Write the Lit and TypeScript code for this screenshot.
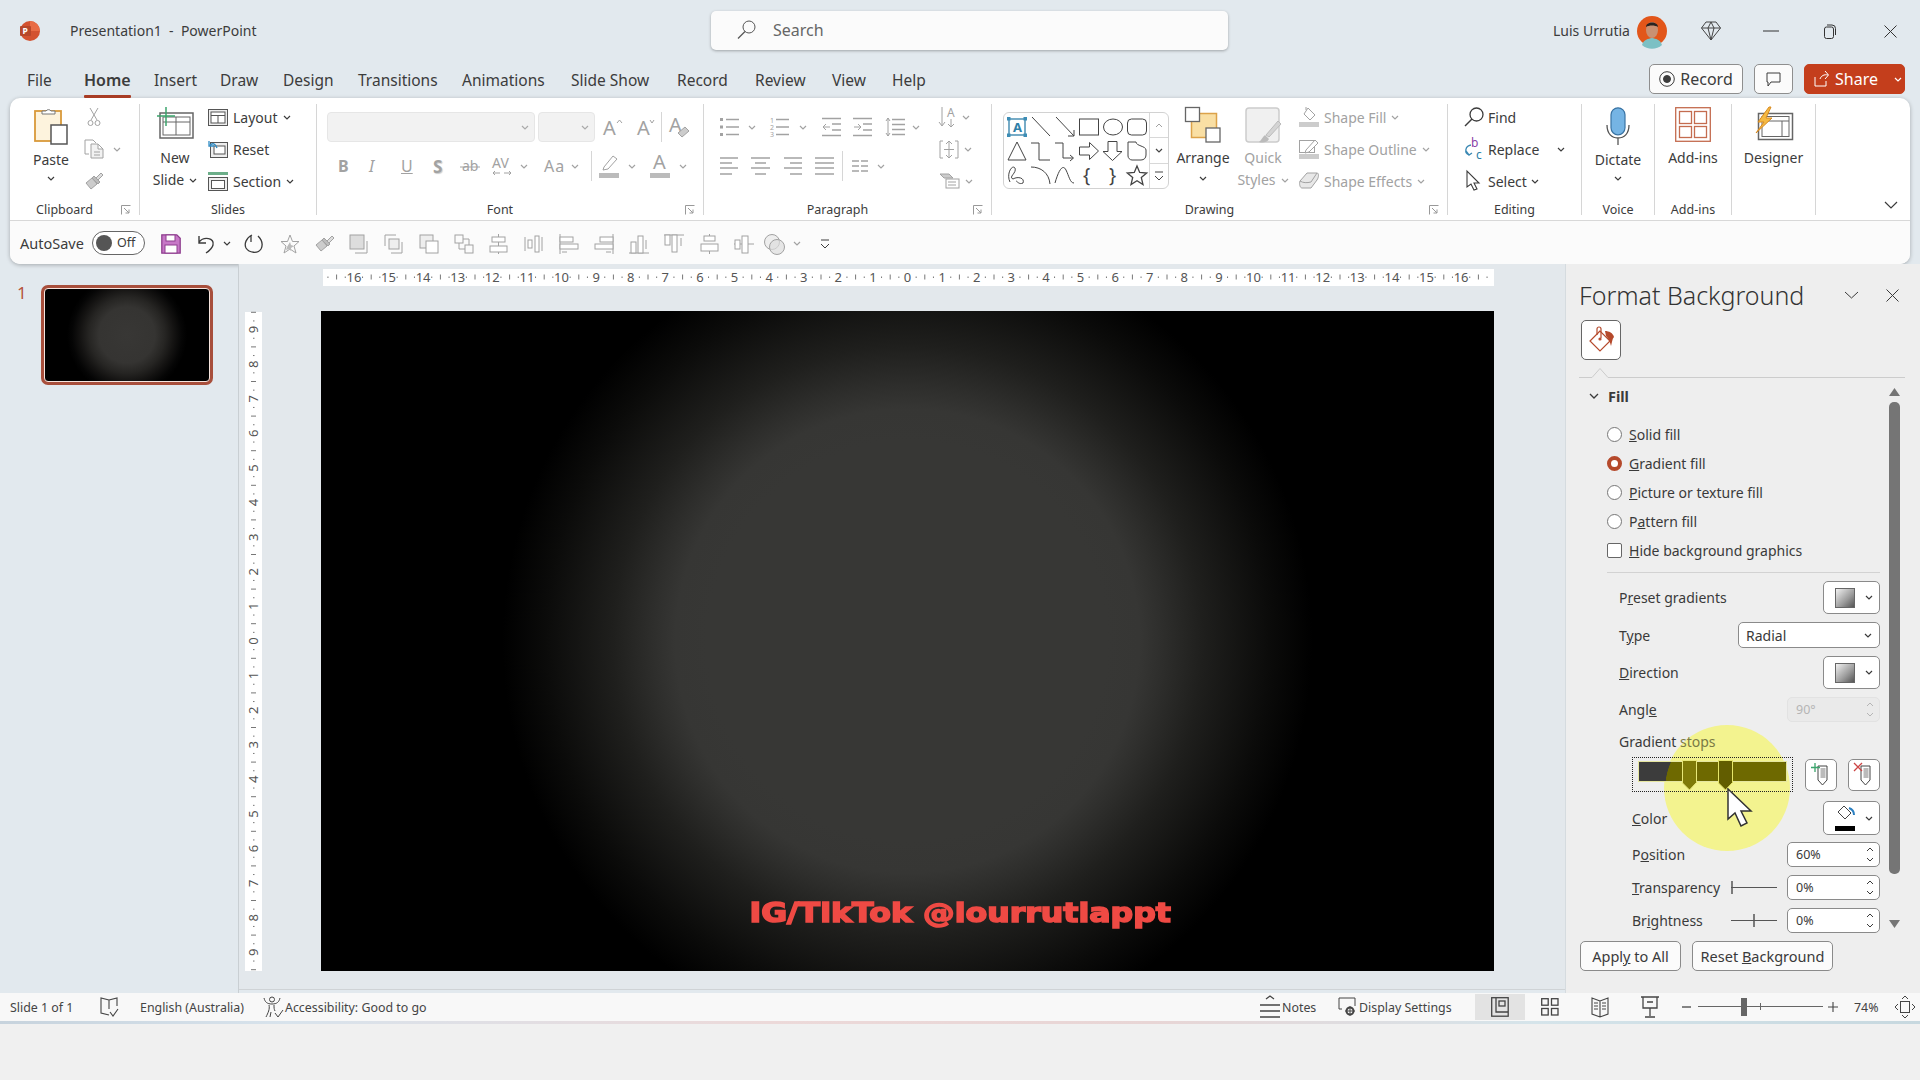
import { LitElement, html, svg, css } from "lit";
import { customElement } from "lit/decorators.js";

const ic = (w: number, h: number, inner: unknown) =>
  html`<svg class="ic" width=${w} height=${h} viewBox="0 0 ${w} ${h}">${inner}</svg>`;

const chev = ic(8, 5, svg`<path d="M1 1l3 3 3-3" stroke-width="1.2"/>`);
const launcher = ic(10, 10, svg`<path d="M.5 9.5V.5h9M3 3l5 5M8 4.5V8H4.5"/>`);

const cut = ic(14, 20, svg`<path d="M3 1l7 12M11 1L4 13"/><circle cx="3.5" cy="16" r="2.5"/><circle cx="10.5" cy="16" r="2.5"/>`);
const copy = ic(20, 20, svg`<path d="M5 15H1V1h8l3 3"/><path d="M7 5h7l5 5v9H7zM14 5v5h5M10 13h6M10 16h6" fill="#f2f2f2"/>`);
const painter = ic(20, 18, svg`<path d="M12 6l5-5 2 2-5 5z" fill="#ddd"/><path d="M10 4l6 6-2 2-6-6z" fill="#bbb"/><path d="M8 6L2 11l5 6 6-5z" fill="#ccc"/>`);
const paste = ic(34, 38, svg`<rect x="1" y="4" width="26" height="30" fill="#fdf3dd" stroke="#d9993a" stroke-width="1.8"/><path d="M8 7V4h4a3 3 0 0 1 5 0h4v3z" fill="#fff" stroke="#777"/><rect x="17" y="18" width="16" height="19" fill="#fff" stroke="#555" stroke-width="1.5"/>`);
const newSlide = ic(37, 32, svg`<rect x="3" y="6" width="33" height="25" stroke="#666" stroke-width="1.5"/><rect x="6" y="10" width="27" height="18" stroke="#666"/><path d="M6 15h27M19 10v18" stroke="#666"/><path d="M9 0v19M0 9h18" stroke="#3ba56c" stroke-width="1.5"/>`);
const layoutI = ic(20, 17, svg`<rect x=".5" y=".5" width="19" height="16" stroke="#555" fill="#eee"/><rect x="3" y="3" width="14" height="11" stroke="#555" fill="#fff"/><path d="M3 6.5h14M10 6.5V14" stroke="#555"/>`);
const resetI = ic(20, 18, svg`<rect x="2.5" y="2.5" width="17" height="15" stroke="#555" fill="#eee"/><rect x="6" y="6" width="11" height="8" stroke="#555" fill="#fff"/><path d="M9 8C7 3 5 3 2 5M1 1v5h5" stroke="#2f8bc4" stroke-width="1.3"/>`);
const sectionI = ic(20, 19, svg`<rect width="20" height="3" fill="#6cae89" stroke="none"/><rect x=".5" y="5.5" width="19" height="13" stroke="#555" fill="#eee"/><rect x="3.5" y="8.5" width="13" height="8" stroke="#555" fill="#fff"/>`);
const tx = (s: string, x: number, y: number, cls = "t14") => svg`<text class=${cls} x=${x} y=${y}>${s}</text>`;
const growI = ic(20, 20, svg`${tx("A", 0, 18, "t20")}<path d="M14 6l2.5-3L19 6"/>`);
const shrinkI = ic(18, 20, svg`${tx("A", 0, 18, "t20")}<path d="M13 3l2 3 2-3"/>`);
const clearI = ic(20, 22, svg`${tx("A", 0, 16, "t20")}<path d="M9 17l7-6 4 4-7 6z" fill="#ccc"/>`);
const abI = ic(20, 18, svg`${tx("ab", 2, 14, "t14")}<path d="M0 10h20"/>`);
const avI = ic(20, 22, svg`${tx("AV", 0, 13, "t14")}<path d="M1 18h7M1 18l2-2M1 18l2 2M12 18h7M19 18l-2-2M19 18l-2 2"/>`);
const hlI = ic(20, 24, svg`<path d="M5 13L14 2l4 3-9 10-5 1z" fill="#fff"/><rect y="19" width="20" height="5" fill="#bbb" stroke="none"/>`);
const colorI = ic(20, 24, svg`${tx("A", 3, 15, "t20")}<rect y="19" width="20" height="5" fill="#bbb" stroke="none"/>`);
const lines = (ys: number[], x1: number, x2: number) => ys.map((y) => svg`<path d="M${x1} ${y}H${x2}" stroke-width="1.3"/>`);
const bulletI = ic(19, 20, svg`<rect x="0" y="1" width="3" height="3" fill="currentColor" stroke="none"/><rect y="8.5" width="3" height="3" fill="currentColor" stroke="none"/><rect y="16" width="3" height="3" fill="currentColor" stroke="none"/>${lines([2.5, 10, 17.5], 6, 19)}`);
const numI = ic(19, 20, svg`${tx("1", 0, 6, "t7")}${tx("2", 0, 13, "t7")}${tx("3", 0, 20, "t7")}${lines([2.5, 10, 17.5], 6, 19)}`);
const decI = ic(19, 20, svg`${lines([1.5, 18.5], 0, 19)}${lines([7, 13], 10, 19)}<path d="M8 10H1M4 7l-3 3 3 3"/>`);
const incI = ic(19, 20, svg`${lines([1.5, 18.5], 0, 19)}${lines([7, 13], 10, 19)}<path d="M1 10h7M5 7l3 3-3 3"/>`);
const spaceI = ic(20, 20, svg`${lines([2.5, 7.5, 12.5, 17.5], 7, 20)}<path d="M3 1v18M1 4l2-3 2 3M1 16l2 3 2-3"/>`);
const alL = ic(18, 20, svg`${lines([2, 12], 0, 18)}${lines([7, 18], 0, 12)}`);
const alC = ic(19, 20, svg`${lines([2, 12], 0, 19)}${lines([7, 18], 4, 15)}`);
const alR = ic(18, 20, svg`${lines([2, 12], 0, 18)}${lines([7, 18], 6, 18)}`);
const alJ = ic(19, 20, lines([2, 7, 12, 18], 0, 19));
const colsI = ic(16, 14, svg`${lines([2, 7, 12], 0, 7)}${lines([2, 7, 12], 9, 16)}`);
const dirI = ic(18, 22, svg`${tx("A", 8, 11, "t12")}<path d="M3 1v18M0 16l3 4 3-4M12 13v8M9 18l3 3 3-3"/>`);
const alTxt = ic(20, 19, svg`<path d="M4 1H1v17h3M16 1h3v17h-3M10 1v17M7 4l3-3 3 3M7 15l3 3 3-3M5 9.5h10"/>`);
const smart = ic(21, 16, svg`<path d="M1 1h9l4 4H5z" fill="#ccc"/><rect x="7" y="6" width="13" height="9" fill="#fff"/><path d="M9 9h8M9 12h8"/>`);
const shapes = [
  svg`<rect x="2" y="2" width="16" height="16" stroke="#2f7fa8" stroke-width="1.3"/><rect x="0" y="0" width="3.5" height="3.5" fill="#3d8db5" stroke="none"/><rect x="16.5" y="0" width="3.5" height="3.5" fill="#3d8db5" stroke="none"/><rect x="0" y="16.5" width="3.5" height="3.5" fill="#3d8db5" stroke="none"/><rect x="16.5" y="16.5" width="3.5" height="3.5" fill="#3d8db5" stroke="none"/>${tx("A", 6, 15, "tb")}`,
  svg`<path d="M1 0l18 19"/>`,
  svg`<path d="M1 0l18 19M19 13v6h-6"/>`,
  svg`<rect x=".5" y="2" width="19" height="16"/>`,
  svg`<ellipse cx="10" cy="10" rx="9.5" ry="8"/>`,
  svg`<rect x=".5" y="2" width="19" height="16" rx="4"/>`,
  svg`<path d="M10 1l9 18H1z"/>`,
  svg`<path d="M0 2h8v17h11"/>`,
  svg`<path d="M0 2h8v15h10M15 14l3.5 3-3.5 3"/>`,
  svg`<path d="M.5 6h10V1.500l9 8.500-9 8.500V14H.5z"/>`,
  svg`<path d="M5 .5h9v10h5L9.500 19.500 0 10.500h5z"/>`,
  svg`<path d="M1 1h8c0 4 10 4 10 8v5c0 3-2 5-5 5H5c-2 0-4-2-4-4z"/>`,
  svg`<path d="M3 17C-1 9 5-1 8 3c2 5-7 9-2 11 5-3 12-1 10 4-4 2-6-2-7-2"/>`,
  svg`<path d="M0 2C10 2 18 8 19 19"/>`,
  svg`<path d="M0 18C4 4 8-1 11 5s4 13 8 13"/>`,
  svg`${tx("{", 4, 17, "tbr")}`,
  svg`${tx("}", 6, 17, "tbr")}`,
  svg`<path d="M10 1l2.700 6.500 7 .500-5.400 4.500 1.700 7L10 15.800 4 19.500l1.700-7L.300 8l7-.500z" stroke-width="1.300"/>`,
];
const arrangeI = ic(36, 36, svg`<rect x="6.500" y="6.500" width="25" height="24" fill="#f9dfa4" stroke="#dca24a" stroke-width="1.500"/><rect x=".5" y=".5" width="14" height="14" fill="#fff" stroke="#666" stroke-width="1.300"/><rect x="21" y="21" width="14" height="14" fill="#fff" stroke="#666" stroke-width="1.300"/>`);
const quickI = ic(37, 38, svg`<rect x="1" y="1" width="33" height="34" rx="3" fill="#f0f0f0" stroke="#ccc" stroke-width="1.500"/><path d="M36 17L24 30l-3-2L33 14z" fill="#d4d4d4" stroke="#bbb"/><path d="M20 28l4 4c-2 4-7 4-10 3 3-2 3-5 6-7z" fill="#bbb" stroke="none"/>`);
const fillI = ic(20, 20, svg`<path d="M9 1l7 7-5 5-6-6zM7 3V0" fill="#fff"/><rect y="15" width="20" height="5" fill="#ccc" stroke="none"/>`);
const outlineI = ic(20, 20, svg`<rect x=".5" y="1.500" width="15" height="12" fill="#fff"/><path d="M7 11l9-10 3 3-9 9-4 1z" fill="#fff"/><rect y="15" width="20" height="5" fill="#ccc" stroke="none"/>`);
const effectI = ic(20, 20, svg`<path d="M1 10l7-8h10c2 0 2 4 0 7l-6 8H3c-2 0-3-4-2-7z" fill="#e8e8e8"/><path d="M1 10c3 2 7 2 11 1l6-9" fill="none"/>`);
const findI = ic(20, 20, svg`<circle cx="12.500" cy="7.500" r="6.500" stroke-width="1.300"/><path d="M8 12l-7 7" stroke-width="1.500"/>`);
const replaceI = ic(20, 22, svg`${tx("b", 7, 9, "tp")}${tx("c", 12, 21, "tc")}<path d="M7 7C1 8 0 15 5 17M2 13l3 4 3-2" stroke="#3a88b3" stroke-width="1.300"/>`);
const selectI = ic(20, 22, svg`<path d="M3 1v16l4-3 3 6 3-1-3-6h5z" stroke-width="1.100" fill="#fff"/>`);
const micI = ic(24, 38, svg`<rect x="5" y=".8" width="14" height="27" rx="7" fill="#75b4e4" stroke="#3973a3" stroke-width="1.200"/><path d="M1 18c0 9 5 13 11 13s11-4 11-13M12 31v7" stroke="#555" stroke-width="1.300"/>`);
const addinsI = ic(36, 35, svg`<g stroke="#c46c4f" stroke-width="1.300"><rect x=".7" y=".7" width="34.600" height="33.600"/><rect x="4.500" y="4.500" width="12" height="12"/><rect x="19.500" y="4.500" width="12" height="12"/><rect x="4.500" y="19.500" width="12" height="11"/><rect x="19.500" y="19.500" width="12" height="11"/></g>`);
const designerI = ic(38, 33, svg`<rect x="3.500" y="6.500" width="34" height="26" stroke="#666" stroke-width="1.500"/><rect x="7" y="9.500" width="27" height="20" stroke="#666"/><path d="M7 14h27M27 14v15" stroke="#666"/><path d="M14 0L3 15h6L1 26l16-15h-6l5-11z" fill="#f4b942" stroke="#d98a1e"/>`);
const saveI = ic(20, 20, svg`<path d="M.8.8h15l3.400 3.400v15H.8z" fill="#c778c7" stroke="#8f3f8f" stroke-width="1.300"/><rect x="5" y="1" width="9" height="6" fill="#fff" stroke="#8f3f8f"/><rect x="4" y="11" width="12" height="8" fill="#fff" stroke="#8f3f8f"/>`);
const undoI = ic(18, 20, svg`<path d="M2 2v7h7M2 8C7 2 18 4 16 11c-1 4-4 6-7 8" stroke-width="1.400"/>`);
const redoI = ic(20, 20, svg`<path d="M8 1C2 4 0 10 2 14c3 5 12 6 15 1 2-4 1-9-3-13M7 1v7" stroke-width="1.300"/>`);
const q = [
  svg`<path d="M10 1l2.500 6.500H19l-5 4.500 2 7-6-4-6 4 2-7L1 7.500h6.500z"/><path d="M10 8l1 3 3 1-3 2v3l-2-2-3 1 1-3z" fill="#bbb" stroke="none"/>`,
  svg`<path d="M13 7l5-5 2 2-5 5z" fill="#ddd"/><path d="M10 4l6 6-2 2-6-6z" fill="#bbb"/><path d="M8 6L2 11l5 6 6-5z" fill="#ccc"/>`,
  svg`<rect x="1" y="1" width="14" height="14" fill="#ddd"/><path d="M18 7v12H6"/>`,
  svg`<path d="M1 12V1h11M18 8v11H7"/><rect x="5" y="5" width="10" height="10" fill="#eee"/>`,
  svg`<rect x="1" y="1" width="13" height="13" fill="#eee"/><rect x="7" y="7" width="12" height="12" fill="#fff"/>`,
  svg`<rect x="1" y="1" width="8" height="8"/><rect x="11" y="11" width="8" height="8"/><path d="M9 5h6v6M5 9v6h6"/>`,
  svg`<path d="M9.500 0v20"/><rect x="3" y="3" width="13" height="5" fill="#fff"/><rect x="1" y="12" width="17" height="6" fill="#fff"/>`,
  svg`<path d="M1 3v14M18 3v14"/><rect x="4" y="6" width="4" height="8" fill="#fff"/><rect x="11" y="2" width="4" height="16" fill="#fff"/>`,
  svg`<path d="M1 0v20"/><rect x="1" y="3" width="13" height="5" fill="#fff"/><rect x="1" y="10" width="18" height="5" fill="#fff"/><path d="M8 18H3"/>`,
  svg`<path d="M19 0v20"/><rect x="6" y="3" width="13" height="5" fill="#fff"/><rect x="1" y="10" width="18" height="5" fill="#fff"/><path d="M12 18h5"/>`,
  svg`<path d="M0 19h20"/><rect x="2" y="8" width="5" height="11" fill="#fff"/><rect x="9" y="2" width="5" height="17" fill="#fff"/><path d="M17 6v9"/>`,
  svg`<path d="M0 1h20"/><rect x="1" y="1" width="5" height="10" fill="#fff"/><rect x="8" y="1" width="5" height="17" fill="#fff"/><path d="M17 12V4"/>`,
  svg`<path d="M9.500 0v3M9.500 17v3"/><rect x="4" y="2" width="11" height="5" fill="#fff"/><rect x="1" y="10" width="17" height="7" fill="#fff"/>`,
  svg`<path d="M0 10h20"/><rect x="1" y="6" width="5" height="9" fill="#fff"/><rect x="8" y="2" width="6" height="17" fill="#fff"/>`,
  svg`<circle cx="8" cy="8" r="7.500" fill="#eee"/><circle cx="13" cy="13" r="7.500" fill="#ddd" fill-opacity=".7"/>`,
];
const bucket = ic(28, 28, svg`<g stroke="#b5492b" stroke-width="1.200"><path d="M13 5L3 15l10 10 10-10z"/><path d="M10 9V3a2 2 0 0 1 4 0l0 9"/><circle cx="13" cy="13" r="1" fill="#b5492b"/></g><path d="M18 5c4 0 8 2 9 6-2 2-2 6-3 9-1-4-2-7-5-10z" fill="#b5492b" stroke="none"/>`);
const addStop = ic(20, 24, svg`<path d="M7 3h9v14l-4.500 5L7 17z" stroke="#444"/><rect x="9.500" y="5" width="5" height="10" fill="#bbb" stroke="none"/><path d="M4 0v9M0 4.500h9" stroke="#3ba56c" stroke-width="1.300"/>`);
const delStop = ic(20, 24, svg`<path d="M7 3h9v14l-4.500 5L7 17z" stroke="#444"/><rect x="9.500" y="5" width="5" height="10" fill="#bbb" stroke="none"/><path d="M0 0l8 8M8 0L0 8" stroke="#c44" stroke-width="1.300"/>`);
const colorBtn = ic(20, 26, svg`<path d="M9 1l7 7-6 6-7-7z" stroke="#444" fill="#fff"/><path d="M14 3c3 1 5 4 5 7" stroke="#2a7fc1" stroke-width="2"/><rect y="21" width="20" height="5" fill="#000" stroke="none"/>`);
const bookI = ic(18, 20, svg`<path d="M9 3L1 1v15l8 2M9 3l8-2v8M9 3v9M10 15l3 4 5-7" stroke-width="1.100"/>`);
const accI = ic(20, 22, svg`<circle cx="9" cy="3.500" r="2.500"/><path d="M1 2c1 4 3 6 8 6s7-2 8-6M6 9c1 4-1 8-3 12M11 9c0 3 0 4 1 6M8 16l-1 5M12 17l3 4 5-7"/>`);
const notesI = ic(20, 24, svg`<path d="M6 4l4-3 4 3M0 10h20M0 16h20M0 22h20" stroke-width="1.300"/>`);
const dispI = ic(18, 20, svg`<path d="M4 12H1V1h16v8"/><circle cx="12" cy="14" r="3.500" stroke-width="2"/><path d="M12 9v10M7 14h10"/>`);
const vNormal = ic(18, 20, svg`<rect x=".7" y=".7" width="16.500" height="18.500" stroke-width="1.300"/><path d="M5 1v14h12" stroke-width="1.300"/><rect x="8" y="4" width="6" height="5" stroke-width="1.300"/>`);
const vSort = ic(18, 18, svg`<rect x=".7" y=".7" width="6.500" height="6.500" stroke-width="1.300"/><rect x="10.500" y=".7" width="6.500" height="6.500" stroke-width="1.300"/><rect x=".7" y="10.500" width="6.500" height="6.500" stroke-width="1.300"/><rect x="10.500" y="10.500" width="6.500" height="6.500" stroke-width="1.300"/>`);
const vRead = ic(18, 20, svg`<path d="M9 4L1 1v16l8 3 8-3V1zM9 4v16M3 6h4M3 9h4M3 12h4M11 6h4M11 9h4M11 12h4" stroke-width="1.100"/>`);
const vShow = ic(18, 22, svg`<path d="M0 1h18M2 1v11h14V1M9 12v8M4 21h10M6 6h6" stroke-width="1.300"/>`);
const fitI = ic(20, 22, svg`<rect x="5.500" y="5.500" width="9" height="11"/><path d="M7 3l3-3 3 3M7 19l3 3 3-3M3 8l-3 3 3 3M17 8l3 3-3 3"/>`);
const handle = (fill: string, stroke: string) => ic(15, 31, svg`<path d="M.5 .5h14v22L7.500 30 .5 23z" fill=${fill} stroke=${stroke}/>`);

const hRuler = () => {
  const c = 584.5, st = 34.6, parts: unknown[] = [];
  for (let k = -17; k <= 17; k += 0.25) {
    const x = c + k * st;
    if (x < 0 || x > 1171) continue;
    if (Number.isInteger(k)) { if (Math.abs(k) <= 16) parts.push(svg`<text class="rt" x=${x} y="13" text-anchor="middle">${String(Math.abs(k))}</text>`); }
    else if (Number.isInteger(k * 2)) parts.push(svg`<path d="M${x} 5.500v5" class="tick"/>`);
    else parts.push(svg`<path d="M${x} 7.500v1.500" class="tick"/>`);
  }
  return html`<svg class="ic" width="1171" height="17" viewBox="0 0 1171 17">${parts}</svg>`;
};
const vRuler = () => {
  const c = 329, st = 34.6, parts: unknown[] = [];
  for (let k = -9.5; k <= 9.5; k += 0.25) {
    const y = c + k * st;
    if (Number.isInteger(k)) parts.push(svg`<text class="rt" transform="translate(13 ${y}) rotate(-90)" text-anchor="middle">${String(Math.abs(k))}</text>`);
    else if (Number.isInteger(k * 2)) parts.push(svg`<path d="M6 ${y}h5" class="tick"/>`);
    else parts.push(svg`<path d="M8 ${y}h1.500" class="tick"/>`);
  }
  return html`<svg class="ic" width="17" height="659" viewBox="0 0 17 659">${parts}</svg>`;
};

const tabs = ["File", "Home", "Insert", "Draw", "Design", "Transitions", "Animations", "Slide Show", "Record", "Review", "View", "Help"];

@customElement("app-root")
export class AppRoot extends LitElement {
  static styles = css`
    :host { display: block; width: 1920px; height: 1080px; overflow: hidden; font-family: "Noto Sans", "Open Sans", sans-serif; color: #3c3c3c; background: #f0f0f0; }
    * { box-sizing: border-box; }
    .app { position: relative; width: 1920px; height: 1080px; display: flex; flex-direction: column; }
    .ic { display: block; flex: none; fill: none; stroke: currentColor; stroke-width: 1; overflow: visible; }
    .ic text { fill: currentColor; stroke: none; font-family: "Noto Sans", sans-serif; }
    .ic .t14 { font-size: 14px; } .ic .t20 { font-size: 20px; } .ic .t7 { font-size: 7px; } .ic .t12 { font-size: 12px; }
    .ic .tb { font-size: 13px; font-weight: 700; fill: #2f7fa8; }
    .ic .tbr { font-size: 19px; fill: #444; }
    .ic .tp { font-size: 12px; fill: #8b3fa8; } .ic .tc { font-size: 12px; fill: #2f7fa8; }
    .ic .rt { font-size: 13px; fill: #555; }
    .tick { stroke: #777; stroke-width: 1; }

    .top { height: 993px; background: #e2e9ee; display: flex; flex-direction: column; flex: none; }
    .title { height: 62px; flex: none; display: grid; grid-template-columns: 711px 517px 1fr; }
    .tl { display: flex; align-items: center; padding: 0 0 1px 20px; gap: 30px; font-size: 14px; white-space: pre; }
    .logo { width: 20px; height: 20px; flex: none; }
    .search { margin-top: 11px; height: 39px; background: #fbfbfb; border-radius: 5px; box-shadow: 0 1px 3px rgba(0,0,0,.3); display: flex; align-items: center; padding: 0 0 2px 26px; gap: 17px; font-size: 16px; color: #666; }
    .tr { display: grid; grid-template-columns: 84px 64px 62px 61px 60px 1fr; padding-left: 325px; align-items: center; font-size: 14px; white-space: nowrap; }
    .nm { margin-top: -2px; }

    .tabrow { height: 36px; flex: none; display: flex; }
    .tabs { flex: 1; display: grid; grid-template-columns: 57px 70px 66px 63px 75px 104px 109px 106px 78px 77px 60px 1fr; padding-left: 27px; align-items: center; font-size: 15.5px; white-space: nowrap; }
    .tab { position: relative; justify-self: start; }
    .tab.on { font-weight: 600; font-size: 16px; width: 47px; }
    .tab.on::after { content: ""; position: absolute; left: 0; right: 0; top: 26px; height: 3px; background: #a83c24; border-radius: 1px; }
    .acts { display: flex; gap: 11px; padding: 2px 15px 4px 0; }
    .act { height: 30px; border: 1px solid #8e8e8e; border-radius: 5px; background: #fbfbfb; display: flex; align-items: center; justify-content: center; gap: 5px; font-size: 16px; }
    .rec { width: 94px; } .cmt { width: 39px; }
    .share { width: 101px; background: #c43e1c; border-color: #c43e1c; color: #fff; justify-content: flex-start; padding-left: 9px; gap: 6px; }
    .share .dd { margin-left: 10px; }

    .ribbon { margin-left: 10px; width: 1900px; height: 166px; flex: none; background: #fff; border-radius: 10px; box-shadow: 0 1px 4px rgba(0,0,0,.28); overflow: hidden; display: flex; flex-direction: column; }
    .rmain { height: 123px; flex: none; display: flex; border-bottom: 1px solid #d8d8d8; }
    .g { height: 111px; margin-top: 6px; border-right: 1px solid #d6d6d6; display: flex; flex-direction: column; flex: none; font-size: 14px; }
    .gb { height: 100px; flex: none; display: flex; }
    .gl { height: 11px; flex: none; display: flex; font-size: 12.5px; line-height: 12px; }
    .gl span { flex: 1; text-align: center; }
    .gl .ic { color: #999; margin: 1px 6px 0 0; width: 10px; }
    .lw { width: 20px; display: flex; flex: none; justify-content: center; }
    .g1 { width: 130px; } .g2 { width: 177px; } .g3 { width: 387px; } .g4 { width: 288px; } .g5 { width: 456px; } .g6 { width: 134px; } .g7 { width: 73px; } .g8 { width: 77px; } .g9 { width: 84px; }
    .big { display: flex; flex-direction: column; align-items: center; padding-top: 3px; line-height: 20px; white-space: nowrap; }
    .slot { height: 39px; display: flex; align-items: flex-start; justify-content: center; flex: none; }
    .big .l { margin-top: 2px; height: 20px; display: flex; align-items: center; gap: 5px; }
    .big .low { margin-top: 4px; }
    .big .ch { height: 20px; display: flex; align-items: center; }
    .big .ch.tight { height: 16px; }
    .stack { display: flex; flex-direction: column; gap: 4px; flex: none; margin-top: -1px; }
    .sr { height: 28px; display: flex; align-items: center; gap: 5px; white-space: nowrap; }
    .dis { color: #a2a2a2; }
    .paste { width: 62px; margin-left: 10px; }
    .clipst { margin-left: 2px; }
    .clipst .w { width: 20px; display: flex; justify-content: center; }
    .clipst .sr { gap: 9px; }
    .pb2 { padding-left: 15px; }
    .nslide { width: 40px; }
    .slst { margin-left: 13px; }

    .frow { display: grid; align-items: center; justify-items: start; height: 30px; font-size: 15px; }
    .f1 { margin: 8px 0 0 10px; grid-template-columns: 211px 65px 34px 24px 8px auto; }
    .f2 { margin: 9px 0 0 21px; grid-template-columns: 31px 32px 32px 27px 32px 28px 24px 27px 20px 8px 29px 22px 29px auto; }
    .combo { height: 30px; background: #f2f2f2; border: 1px solid #e6e6e6; border-radius: 4px; display: flex; align-items: center; justify-content: flex-end; padding-right: 5px; color: #aaa; }
    .cf { width: 208px; } .cs { width: 57px; }
    .vs { width: 1px; height: 30px; background: #d6d6d6; }
    .b { font-weight: 700; font-size: 16px; } .i { font-style: italic; font-size: 16px; } .u { text-decoration: underline; font-size: 16px; }
    .ss { font-weight: 700; font-size: 17px; text-shadow: 1px 1px 1px #ccc; }
    .aa { font-size: 16px; letter-spacing: 1px; }
    .col { display: flex; flex-direction: column; flex: none; }
    .pl { width: 235px; padding-left: 16px; }
    .p1 { margin-top: 8px; grid-template-columns: 28px 22px 29px 23px 31px 32px 27px auto; }
    .p2 { margin-top: 9px; grid-template-columns: 31px 33px 31px 27px 10px 25px auto; }

    .gal { width: 166px; height: 77px; margin: 8px 0 0 11px; border: 1px solid #d2d2d2; border-radius: 6px; display: flex; flex: none; color: #444; padding-left: 1px; }
    .cells { width: 145px; display: grid; grid-template-columns: repeat(6, 24px); grid-auto-rows: 24px; padding-top: 2px; justify-items: center; align-items: center; }
    .gsc { width: 19px; border-left: 1px solid #d8d8d8; display: flex; flex-direction: column; }
    .gsc div { flex: 1; display: flex; align-items: center; justify-content: center; }
    .gsc div + div { border-top: 1px solid #d8d8d8; }
    .arr { width: 56px; margin-left: 6px; }
    .qs { width: 56px; margin-left: 4px; }
    .dst { margin-left: 8px; }
    .est { margin-left: 16px; }
    .est .sr { gap: 4px; }
    .rpch { margin-left: 14px; }
    .wide { width: 100%; }
    .coll { flex: 1; display: flex; justify-content: flex-end; align-items: flex-end; padding: 0 12px 11px 0; }

    .qat { flex: 1; background: #fbfbfb; display: grid; grid-template-columns: 72px 69px 36px 26px 21px 36px 34px 35px 35px 35px 35px 35px 35px 35px 35px 35px 35px 36px 34px 30px 29px 27px auto; padding-left: 10px; align-items: center; justify-items: start; font-size: 14.5px; }
    .qat > .ic, .qat > .dis { margin-top: 2px; }
    .tog { width: 53px; height: 24px; border: 1px solid #666; border-radius: 12px; background: #fff; display: flex; align-items: center; padding-left: 3px; gap: 5px; font-size: 12.5px; }
    .knob { width: 16px; height: 16px; border-radius: 50%; background: #555; flex: none; }

    .main { flex: 1; display: flex; min-height: 0; }
    .thumbs { width: 239px; flex: none; border-right: 1px solid #c9cfd3; padding: 21px 0 0 17px; display: flex; align-items: flex-start; }
    .num { width: 24px; font-size: 17px; color: #b5533c; line-height: 16px; }
    .thumb { width: 172px; height: 100px; border: 3px solid #a84f3c; border-radius: 7px; background: #a84f3c; flex: none; }
    .thumbin { width: 100%; height: 100%; border: 1px solid #f5e5df; border-radius: 4px; background: radial-gradient(circle at center, #383735 0, #353432 28px, #262523 38px, #141312 47px, #050505 55px, #000 60px); }
    .work { width: 1326px; flex: none; height: 726px; border-bottom: 1px solid #cfd3d6; padding: 5px 0 0 6px; background: #e3e8ec; }
    .hr { width: 1171px; height: 17px; background: #fff; margin-left: 78px; }
    .wrow { display: flex; margin-top: 25px; }
    .vr { width: 17px; height: 659px; margin-top: 1px; background: #fff; flex: none; }
    .slide { width: 1173px; height: 660px; margin-left: 59px; flex: none; background: radial-gradient(circle at center, #373735 0, #373735 200px, #363634 232px, #2e2e2c 255px, #1f1f1d 295px, #0b0b0a 362px, #000 405px); display: flex; align-items: flex-end; justify-content: center; padding: 0 0 40px 106px; }
    .cap { font-family: "DejaVu Sans", sans-serif; font-weight: 700; font-size: 27px; line-height: 36px; color: #ef4a44; filter: blur(.5px); -webkit-text-stroke: 1.6px #ef4a44; white-space: nowrap; transform: scaleX(1.17); }

    .panel { flex: 1; background: #eeeeee; border-left: 1px solid #d5dbdf; position: relative; padding: 12px 0 0 14px; font-size: 14px; color: #3a3a3a; }
    .halo { position: absolute; left: 98px; top: 461px; width: 126px; height: 126px; border-radius: 50%; background: #f3f38f; }
    .pz { position: relative; }
    .ph { height: 40px; display: flex; align-items: center; margin: -1px 0 1px -1px; }
    .ph h1 { margin: 0; font-size: 25px; font-weight: 300; color: #333; width: 265px; white-space: nowrap; }
    .ph .cl { margin-left: 27px; }
    .fbtn { width: 40px; height: 40px; margin: 5px 0 0 1px; background: #fff; border: 1px solid #666; border-radius: 5px; display: flex; align-items: center; justify-content: center; }
    .divd { margin: 7px 0 0 -1px; color: #ccc; }
    .area { display: flex; width: 320px; height: 555px; }
    .form { width: 309px; padding-right: 9px; flex: none; }
    .sb { width: 11px; display: flex; flex-direction: column; align-items: center; padding-top: 10px; color: #757575; flex: none; }
    .thumbbar { width: 11px; height: 472px; background: #757575; border-radius: 5px; margin: 6px 0 46px; flex: none; }
    .fhead { margin-top: 6px; height: 24px; display: flex; align-items: center; gap: 9px; font-weight: 700; font-size: 14.5px; padding-left: 9px; }
    .opts { margin: 12px 0 0 27px; display: flex; flex-direction: column; }
    .opt { height: 29px; display: flex; align-items: center; gap: 7px; }
    .radio { width: 15px; height: 15px; border: 1px solid #777; border-radius: 50%; background: #fff; flex: none; }
    .radio.on { border: 4px solid #b5492b; }
    .chk { width: 15px; height: 15px; border: 1px solid #666; border-radius: 2px; background: #fff; flex: none; }
    .sep { height: 1px; background: #d2d2d2; margin: 7px 0 0 27px; }
    .r { display: flex; align-items: center; justify-content: space-between; }
    .i1 { padding-left: 39px; } .i2 { padding-left: 52px; }
    .m8 { margin-top: 8px; } .m9 { margin-top: 9px; } .m7 { margin-top: 7px; } .m6 { margin-top: 6px; }
    .h33 { height: 33px; } .h26 { height: 26px; } .h25 { height: 25px; } .h20 { height: 20px; } .h35 { height: 35px; } .h34 { height: 34px; }
    .ctl { background: #fff; border: 1px solid #8a8a8a; border-radius: 5px; display: flex; align-items: center; flex: none; }
    .pick { width: 57px; height: 100%; padding-left: 11px; gap: 10px; }
    .swatch { width: 20px; height: 20px; background: linear-gradient(135deg, #f2f2f2, #9a9a9a 60%, #555); border: 1px solid #666; flex: none; }
    .sel { width: 142px; height: 100%; padding: 0 7px; justify-content: space-between; }
    .num-in { width: 93px; height: 100%; padding: 0 5px 0 8px; justify-content: space-between; font-size: 12.5px; }
    .num-in.off { background: #eaeaea; border-color: #e2e2e2; color: #b5b5b5; }
    .spin { display: flex; flex-direction: column; gap: 5px; }
    .tint { color: #7a7a45; }
    .stops { gap: 0; justify-content: flex-start; }
    .dots { position: relative; width: 161px; height: 35px; border: 1px dotted #222; padding: 3px 5px; flex: none; }
    .bar { width: 149px; height: 21px; border: 1px solid #e6e6a0; background: radial-gradient(circle 63px at 89px 26px, #6e6900 99%, #3c3c3c 100%); }
    .hd { position: absolute; top: 2px; }
    .hd1 { left: 49px; } .hd2 { left: 85px; }
    .sbtn { width: 32px; height: 32px; justify-content: center; }
    .sbtn1 { margin-left: 12px; } .sbtn2 { margin-left: 11px; }
    .lab { width: 99px; flex: none; }
    .slider { width: 46px; height: 13px; flex: none; color: #555; }
    .push { margin-left: auto; }
    .foot { display: flex; gap: 11px; margin-top: 8px; }
    .fb { height: 30px; background: #fbfbfb; border: 1px solid #8a8a8a; border-radius: 5px; display: flex; align-items: center; justify-content: center; font-size: 14.5px; white-space: nowrap; }
    .fb1 { width: 101px; } .fb2 { width: 141px; }
    .cursor { position: absolute; left: 161px; top: 524px; z-index: 3; }

    .status { height: 28px; background: #f8f8f8; flex: none; display: grid; grid-template-columns: 90px 40px 123px 22px 975px 22px 56px 21px 116px 50px 50px 50px 50px 23px 129px 27px 41px auto; padding-left: 10px; align-items: center; justify-items: start; font-size: 12.4px; color: #444; white-space: nowrap; }
    .vc { justify-self: stretch; height: 26px; display: flex; align-items: center; justify-content: center; }
    .vc.on { background: #e3e3e3; }
    .zs { position: relative; width: 125px; height: 18px; }
    .zs .ln { position: absolute; left: 0; right: 0; top: 8px; height: 1px; background: #666; }
    .zs .kn { position: absolute; left: 43px; top: 0; width: 6px; height: 18px; background: #666; }
    .zs .md { position: absolute; left: 62px; top: 5px; width: 1px; height: 7px; background: #666; }
    .zc { justify-self: center; }
    .strip { height: 3px; flex: none; background: linear-gradient(90deg, #c7d3dd, #d8e3ec 15%, #ecd9d9 40%, #e8d5d5 60%, #d5e4ea 80%, #c7d8df); }
  `;

  render() {
    const row = (i: unknown, label: string, ch?: unknown) => html`<div class="sr">${i}<span>${label}</span>${ch}</div>`;
    const spin = html`<div class="spin">${ic(8, 5, svg`<path d="M1 4l3-3 3 3"/>`)}${ic(8, 5, svg`<path d="M1 1l3 3 3-3"/>`)}</div>`;
    const slider = (pos: number) => html`<svg class="ic slider" width="46" height="13" viewBox="0 0 46 13"><path d="M0 6.500h46"/><path d="M${pos} 0v13" stroke-width="1.500"/></svg>`;
    return html`<div class="app">
      <div class="top">
        <div class="title">
          <div class="tl">
            <svg class="logo" viewBox="0 0 20 20"><circle cx="10" cy="10" r="10" fill="#d35230"/><path d="M10 0a10 10 0 0 1 10 10H10z" fill="#e86c45"/><rect x="0" y="5" width="11" height="10" rx="1" fill="#b7472a"/><text x="2.500" y="13" font-size="8.500" font-weight="700" fill="#fff">P</text></svg>
            <span>Presentation1  -  PowerPoint</span>
          </div>
          <div class="search">${ic(19, 19, svg`<circle cx="12" cy="7" r="6" stroke="#555"/><path d="M8 11.500L1 18.500" stroke="#555" stroke-width="1.300"/>`)}<span>Search</span></div>
          <div class="tr">
            <span class="nm">Luis Urrutia</span>
            <svg class="ic" width="30" height="30" viewBox="0 0 30 30"><circle cx="15" cy="15" r="15" fill="#e2561a" stroke="none"/><path d="M5 29c2-6 6-6 10-7 4 1 8 1 10 7a15 15 0 0 1-20 0z" fill="#7cc0c4" stroke="none"/><ellipse cx="15" cy="14" rx="6" ry="8" fill="#c99072" stroke="none"/><path d="M9 11c0-6 12-6 12 0-3-2-9-2-12 0z" fill="#2a2320" stroke="none"/></svg>
            ${ic(20, 20, svg`<path d="M5 1h10l4.500 6L10 19 .5 7zM.5 7h19M7 7l3 12 3-12M7 7l3-6 3 6" stroke="#444"/>`)}
            ${ic(16, 2, svg`<path d="M0 1h16" stroke="#333"/>`)}
            ${ic(12, 15, svg`<rect x=".5" y="3" width="9" height="11.500" rx="2" stroke="#333"/><path d="M3 1h5a3.500 3.500 0 0 1 3.500 3.500V11" stroke="#333"/>`)}
            ${ic(13, 13, svg`<path d="M.5.5l12 12M12.500.5l-12 12" stroke="#333"/>`)}
          </div>
        </div>
        <div class="tabrow">
          <div class="tabs">${tabs.map((t) => html`<span class="tab ${t === "Home" ? "on" : ""}">${t}</span>`)}</div>
          <div class="acts">
            <div class="act rec">${ic(16, 16, svg`<circle cx="8" cy="8" r="7.300"/><circle cx="8" cy="8" r="3.500" fill="currentColor"/>`)}<span>Record</span></div>
            <div class="act cmt">${ic(15, 15, svg`<path d="M1 1h13v9H5L2 14v-4H1z"/>`)}</div>
            <div class="act share">${ic(15, 16, svg`<path d="M1 6v9h11v-5M6 8c1-3 4-5 8-4M11 0l3.500 4L11 8" stroke="#fff"/>`)}<span>Share</span><span class="dd">${chev}</span></div>
          </div>
        </div>
        <div class="ribbon">
          <div class="rmain">
            <div class="g g1">
              <div class="gb">
                <div class="big paste"><div class="slot">${paste}</div><div class="l low">Paste</div><div class="ch tight">${chev}</div></div>
                <div class="stack clipst dis">
                  <div class="sr"><div class="w">${cut}</div></div>
                  <div class="sr"><div class="w">${copy}</div>${chev}</div>
                  <div class="sr"><div class="w">${painter}</div></div>
                </div>
              </div>
              <div class="gl"><span>Clipboard</span><div class="lw">${launcher}</div></div>
            </div>
            <div class="g g2">
              <div class="gb pb2">
                <div class="big nslide"><div class="slot">${newSlide}</div><div class="l">New</div><div class="l">Slide ${chev}</div></div>
                <div class="stack slst">
                  ${row(layoutI, "Layout", chev)}${row(resetI, "Reset")}${row(sectionI, "Section", chev)}
                </div>
              </div>
              <div class="gl"><span>Slides</span></div>
            </div>
            <div class="g g3">
              <div class="gb col dis">
                <div class="frow f1">
                  <div class="combo cf">${chev}</div><div class="combo cs">${chev}</div>${growI}${shrinkI}<div class="vs"></div>${clearI}
                </div>
                <div class="frow f2">
                  <span class="b">B</span><span class="i">I</span><span class="u">U</span><span class="ss">S</span>${abI}${avI}${chev}<span class="aa">Aa</span>${chev}<div class="vs"></div>${hlI}${chev}${colorI}${chev}
                </div>
              </div>
              <div class="gl"><span>Font</span><div class="lw">${launcher}</div></div>
            </div>
            <div class="g g4">
              <div class="gb dis">
                <div class="col pl">
                  <div class="frow p1">${bulletI}${chev}${numI}${chev}${decI}${incI}${spaceI}${chev}</div>
                  <div class="frow p2">${alL}${alC}${alR}${alJ}<div class="vs"></div>${colsI}${chev}</div>
                </div>
                <div class="stack">
                  <div class="sr">${dirI}${chev}</div><div class="sr">${alTxt}${chev}</div><div class="sr">${smart}${chev}</div>
                </div>
              </div>
              <div class="gl"><span>Paragraph</span><div class="lw">${launcher}</div></div>
            </div>
            <div class="g g5">
              <div class="gb">
                <div class="gal">
                  <div class="cells">${shapes.map((s) => ic(20, 20, s))}</div>
                  <div class="gsc">
                    <div class="dis">${ic(8, 5, svg`<path d="M1 4l3-3 3 3"/>`)}</div>
                    <div>${chev}</div>
                    <div>${ic(10, 10, svg`<path d="M1 1h8M1 5l4 4 4-4"/>`)}</div>
                  </div>
                </div>
                <div class="big arr"><div class="slot">${arrangeI}</div><div class="l">Arrange</div><div class="ch">${chev}</div></div>
                <div class="big qs dis"><div class="slot">${quickI}</div><div class="l">Quick</div><div class="l">Styles ${chev}</div></div>
                <div class="stack dst dis">
                  ${row(fillI, "Shape Fill", chev)}${row(outlineI, "Shape Outline", chev)}${row(effectI, "Shape Effects", chev)}
                </div>
              </div>
              <div class="gl"><span>Drawing</span><div class="lw">${launcher}</div></div>
            </div>
            <div class="g g6">
              <div class="gb">
                <div class="stack est">
                  ${row(findI, "Find")}
                  <div class="sr">${replaceI}<span>Replace</span><span class="rpch">${chev}</span></div>
                  ${row(selectI, "Select", chev)}
                </div>
              </div>
              <div class="gl"><span>Editing</span></div>
            </div>
            <div class="g g7">
              <div class="gb"><div class="big wide"><div class="slot">${micI}</div><div class="l low">Dictate</div><div class="ch tight">${chev}</div></div></div>
              <div class="gl"><span>Voice</span></div>
            </div>
            <div class="g g8">
              <div class="gb"><div class="big wide"><div class="slot">${addinsI}</div><div class="l">Add-ins</div></div></div>
              <div class="gl"><span>Add-ins</span></div>
            </div>
            <div class="g g9">
              <div class="gb"><div class="big wide"><div class="slot">${designerI}</div><div class="l">Designer</div></div></div>
              <div class="gl"><span></span></div>
            </div>
            <div class="coll">${ic(14, 8, svg`<path d="M1 1l6 6 6-6" stroke-width="1.200"/>`)}</div>
          </div>
          <div class="qat">
            <span>AutoSave</span>
            <div class="tog"><div class="knob"></div><span>Off</span></div>
            ${saveI}${undoI}${chev}${redoI}
            ${q.map((i) => html`<div class="dis">${ic(20, 20, i)}</div>`)}
            <div class="dis">${chev}</div>
            ${ic(10, 10, svg`<path d="M1 1h8M1 5l4 4 4-4"/>`)}
          </div>
        </div>
        <div class="main">
          <div class="thumbs">
            <div class="num">1</div>
            <div class="thumb"><div class="thumbin"></div></div>
          </div>
          <div class="work">
            <div class="hr">${hRuler()}</div>
            <div class="wrow">
              <div class="vr">${vRuler()}</div>
              <div class="slide"><div class="cap">IG/TikTok @lourrutiappt</div></div>
            </div>
          </div>
          <div class="panel">
            <div class="halo"></div>
            <div class="pz">
              <div class="ph"><h1>Format Background</h1>${ic(15, 8, svg`<path d="M1 1l6.500 6L14 1"/>`)}<span class="cl">${ic(13, 13, svg`<path d="M.5.5l12 12M12.500.5l-12 12"/>`)}</span></div>
              <div class="fbtn">${bucket}</div>
              <div class="divd">${ic(326, 11, svg`<path d="M0 10.500h13l8-9 8 9h297"/>`)}</div>
              <div class="area">
                <div class="form">
                  <div class="fhead">${ic(10, 6, svg`<path d="M1 1l4 4 4-4" stroke-width="1.300"/>`)}<span>Fill</span></div>
                  <div class="opts">
                    <div class="opt"><div class="radio"></div><span><u>S</u>olid fill</span></div>
                    <div class="opt"><div class="radio on"></div><span><u>G</u>radient fill</span></div>
                    <div class="opt"><div class="radio"></div><span><u>P</u>icture or texture fill</span></div>
                    <div class="opt"><div class="radio"></div><span>P<u>a</u>ttern fill</span></div>
                    <div class="opt"><div class="chk"></div><span><u>H</u>ide background graphics</span></div>
                  </div>
                  <div class="sep"></div>
                  <div class="r i1 h33 m8"><span>P<u>r</u>eset gradients</span><div class="ctl pick"><div class="swatch"></div>${chev}</div></div>
                  <div class="r i1 h26 m8"><span>T<u>y</u>pe</span><div class="ctl sel"><span>Radial</span>${chev}</div></div>
                  <div class="r i1 h33 m8"><span><u>D</u>irection</span><div class="ctl pick"><div class="swatch"></div>${chev}</div></div>
                  <div class="r i1 h25 m8"><span>Angl<u>e</u></span><div class="ctl num-in off"><span>90°</span>${spin}</div></div>
                  <div class="r i1 h20 m9"><span>Gradient <span class="tint">stops</span></span></div>
                  <div class="r i2 h35 m6 stops">
                    <div class="dots"><div class="bar"></div><div class="hd hd1">${handle("#7f7a08", "#e8e87a")}</div><div class="hd hd2">${handle("#625d00", "#e6e66a")}</div></div>
                    <div class="ctl sbtn sbtn1">${addStop}</div><div class="ctl sbtn sbtn2">${delStop}</div>
                  </div>
                  <div class="r i2 h34 m9"><span><u>C</u>olor</span><div class="ctl pick">${colorBtn}${chev}</div></div>
                  <div class="r i2 h25 m7"><span>P<u>o</u>sition</span><div class="ctl num-in"><span>60%</span>${spin}</div></div>
                  <div class="r i2 h25 m8"><span class="lab"><u>T</u>ransparency</span>${slider(1)}<div class="ctl num-in push"><span>0%</span>${spin}</div></div>
                  <div class="r i2 h25 m8"><span class="lab">Br<u>i</u>ghtness</span>${slider(23)}<div class="ctl num-in push"><span>0%</span>${spin}</div></div>
                </div>
                <div class="sb">
                  ${ic(11, 8, svg`<path d="M5.500 0L11 8H0z" fill="currentColor" stroke="none"/>`)}
                  <div class="thumbbar"></div>
                  ${ic(11, 8, svg`<path d="M5.500 8L11 0H0z" fill="currentColor" stroke="none"/>`)}
                </div>
              </div>
              <div class="foot">
                <div class="fb fb1"><span>Appl<u>y</u> to All</span></div>
                <div class="fb fb2"><span>Reset <u>B</u>ackground</span></div>
              </div>
            </div>
            <svg class="cursor" width="26" height="39" viewBox="0 0 26 39"><path d="M1 1v30l7-6 6 13 6-3-6-12h10z" fill="#fff" stroke="#333" stroke-width="1.500"/></svg>
          </div>
        </div>
      </div>
      <div class="status">
        <span>Slide 1 of 1</span>${bookI}<span>English (Australia)</span>${accI}<span>Accessibility: Good to go</span>
        ${notesI}<span>Notes</span>${dispI}<span>Display Settings</span>
        <div class="vc on">${vNormal}</div><div class="vc">${vSort}</div><div class="vc">${vRead}</div><div class="vc">${vShow}</div>
        <span class="zc">${ic(9, 2, svg`<path d="M0 1h9" stroke-width="1.300"/>`)}</span>
        <div class="zs"><div class="ln"></div><div class="md"></div><div class="kn"></div></div>
        ${ic(12, 12, svg`<path d="M6 1v10M1 6h10" stroke-width="1.100"/>`)}
        <span>74%</span>${fitI}
      </div>
      <div class="strip"></div>
    </div>`;
  }
}
